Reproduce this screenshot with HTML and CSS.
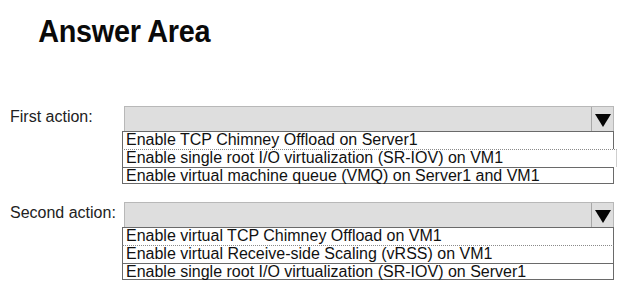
FILE: index.html
```html
<!DOCTYPE html>
<html>
<head>
<meta charset="utf-8">
<link rel="stylesheet" href="styles.css">
</head>
<body>
<div class="page">
  <h1 class="title">Answer Area</h1>
  <div class="question q1">
    <div class="label">First action:</div>
    <div class="select">
      <div class="bar"><span class="arrow"></span></div>
      <ul class="options">
        <li class="opt">Enable TCP Chimney Offload on Server1</li>
        <li class="opt dotted wide">Enable single root I/O virtualization (SR-IOV) on VM1</li>
        <li class="opt last">Enable virtual machine queue (VMQ) on Server1 and VM1</li>
      </ul>
    </div>
  </div>
  <div class="question q2">
    <div class="label">Second action:</div>
    <div class="select">
      <div class="bar"><span class="arrow"></span></div>
      <ul class="options">
        <li class="opt">Enable virtual TCP Chimney Offload on VM1</li>
        <li class="opt dotted">Enable virtual Receive-side Scaling (vRSS) on VM1</li>
        <li class="opt last">Enable single root I/O virtualization (SR-IOV) on Server1</li>
      </ul>
    </div>
  </div>
</div>
</body>
</html>
```
FILE: styles.css
```css
html, body {
  margin: 0;
  padding: 0;
  background: #fff;
}
body {
  width: 624px;
  height: 289px;
  overflow: hidden;
  font-family: "Liberation Sans", Arial, sans-serif;
  color: #111;
}
.page {
  display: flex;
  flex-direction: column;
}
.title {
  margin: 0;
  padding: 14px 0 0 41px;
  height: 94px;
  box-sizing: border-box;
  font-size: 31px;
  font-weight: bold;
  line-height: 36px;
  color: #0a0a0a;
  letter-spacing: -0.3px;
  transform: scaleX(0.93);
  transform-origin: left top;
}
.question {
  display: flex;
  align-items: flex-start;
}
.q1 {
  margin-top: 12px;
}
.q2 {
  margin-top: 18px;
}
.label {
  width: 114px;
  padding-left: 10px;
  padding-top: 2px;
  font-size: 16px;
  line-height: 18px;
  color: #222;
  white-space: nowrap;
}
.select {
  width: 490px;
  display: flex;
  flex-direction: column;
}
.bar {
  height: 25px;
  box-sizing: border-box;
  background: #dedede;
  border: 1px solid #b8b8b8;
  border-bottom: none;
  display: flex;
  justify-content: flex-end;
}
.arrow {
  width: 21px;
  border-left: 1px solid #a8a8a8;
  display: flex;
  align-items: center;
  justify-content: center;
}
.arrow::after {
  content: "";
  width: 0;
  height: 0;
  margin-top: 3px;
  border-left: 8px solid transparent;
  border-right: 8px solid transparent;
  border-top: 13px solid #050505;
}
.options {
  list-style: none;
  margin: 0 0 0 -2px;
  padding: 0;
  width: 492px;
  display: flex;
  flex-direction: column;
}
.opt {
  height: 18px;
  box-sizing: border-box;
  padding-left: 3px;
  font-size: 16px;
  line-height: 16px;
  color: #111;
  border: 1px solid #6a6a6a;
  border-bottom: none;
  white-space: nowrap;
}
.opt.last {
  height: 17px;
  border-bottom: 1px solid #6a6a6a;
}
.opt.dotted {
  border-top: 1px dotted #8a8a8a;
}
.opt.wide {
  margin-right: -3px;
  border-right-color: #cfcfcf;
}
```
